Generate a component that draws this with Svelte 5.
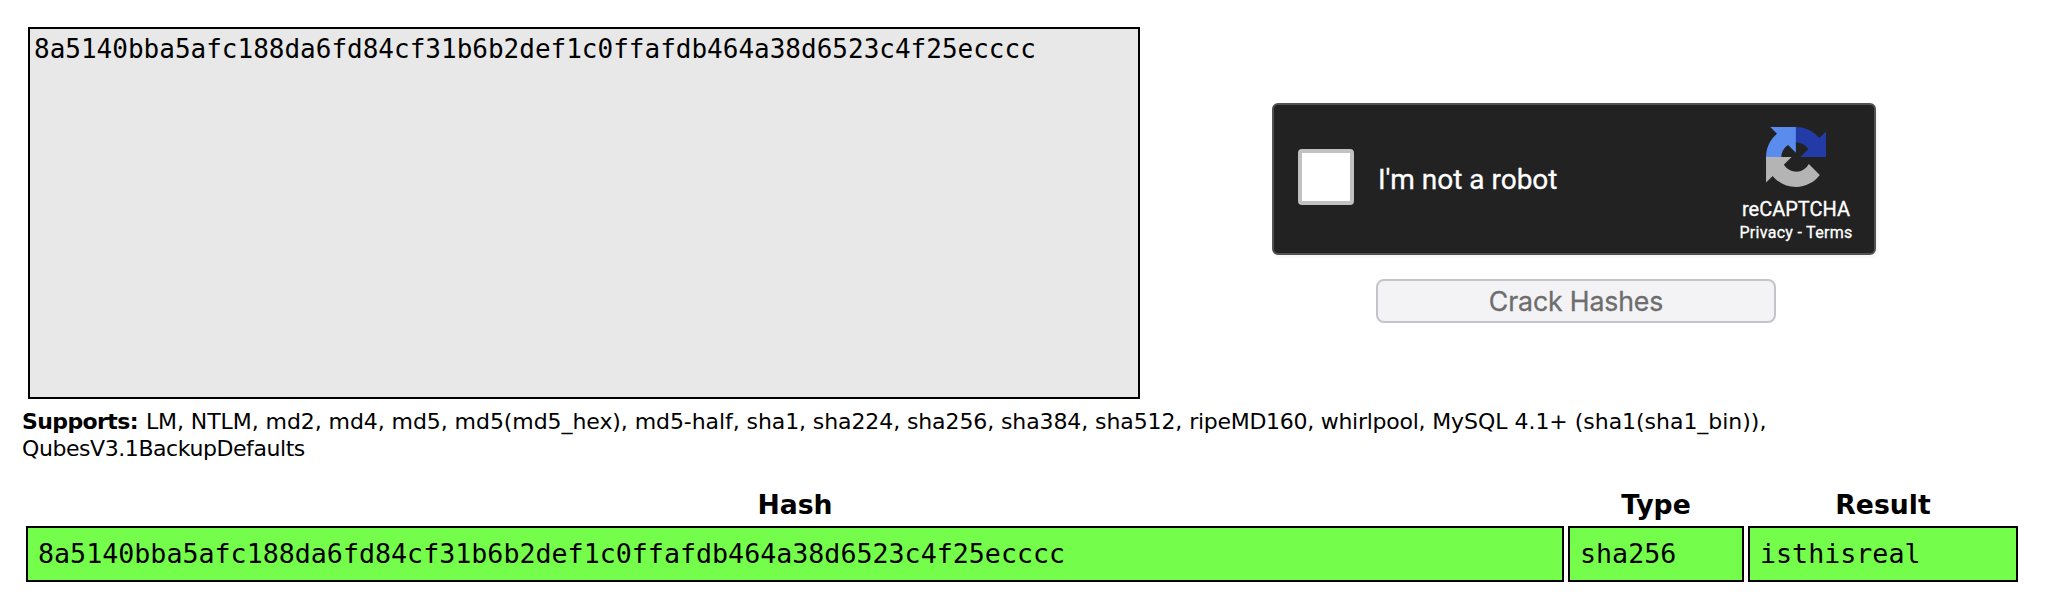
<script>
  const hash = '8a5140bba5afc188da6fd84cf31b6b2def1c0ffafdb464a38d6523c4f25ecccc';
  const rows = [{ hash, type: 'sha256', result: 'isthisreal' }];
</script>

<main>
  <form class="cracker" onsubmit={(e) => e.preventDefault()}>
    <textarea spellcheck="false" value={hash}></textarea>
    <div class="side">
      <div class="captcha">
        <span class="check"></span>
        <span class="label">I'm not a robot</span>
        <div class="brand">
          <svg viewBox="0 0 64 64" width="60" height="60">
            <path fill="#233ba6" d="M64 31.955l-.033-1.37V4.687l-7.16 7.16C50.948 4.674 42.033.093 32.05.093c-10.4 0-19.622 4.96-25.458 12.64l11.736 11.86a15.55 15.55 0 0 1 4.754-5.334c2.05-1.6 4.952-2.906 8.968-2.906.485 0 .86.057 1.135.163 4.976.393 9.288 3.14 11.828 7.124l-8.307 8.307L64 31.953" />
            <path fill="#5a8cee" d="M31.862.094l-1.37.033H4.594l7.16 7.16C4.58 13.147 0 22.06 0 32.046c0 10.4 4.96 19.622 12.64 25.458L24.5 45.768a15.55 15.55 0 0 1-5.334-4.754c-1.6-2.05-2.906-4.952-2.906-8.968 0-.485.057-.86.163-1.135.393-4.976 3.14-9.288 7.124-11.828l8.307 8.307L31.86.095" />
            <path fill="#b4b4b4" d="M.001 32.045l.033 1.37v25.898l7.16-7.16c5.86 7.173 14.774 11.754 24.76 11.754 10.4 0 19.622-4.96 25.458-12.64l-11.736-11.86a15.55 15.55 0 0 1-4.754 5.334c-2.05 1.6-4.952 2.906-8.968 2.906-.485 0-.86-.057-1.135-.163-4.976-.393-9.288-3.14-11.828-7.124l8.307-8.307c-10.522.04-22.4.066-27.295-.005" />
          </svg>
          <span class="name">reCAPTCHA</span>
          <span class="links">Privacy - Terms</span>
        </div>
      </div>
      <button disabled>Crack Hashes</button>
    </div>
  </form>

  <p><b>Supports:</b> <span class="first">LM, NTLM, md2, md4, md5, md5(md5_hex), md5-half,</span> <span>sha1, sha224, sha256, sha384, sha512,</span> <span class="names">ripeMD160, whirlpool,</span> <span class="mysql">MySQL 4.1+ (sha1(sha1_bin)),</span><br /><span class="last">QubesV3.1BackupDefaults</span></p>

  <div class="results">
    <div class="th">Hash</div>
    <div class="th">Type</div>
    <div class="th">Result</div>
    {#each rows as row}
      <div class="td">{row.hash}</div>
      <div class="td">{row.type}</div>
      <div class="td">{row.result}</div>
    {/each}
  </div>
</main>

<style>
  :global(body) {
    margin: 0;
    background: #fff;
  }
  main {
    box-sizing: border-box;
    height: 596px;
    overflow: hidden;
    padding: 27px 36px 0 22px;
    color: #000;
    font-family: Verdana, 'DejaVu Sans', sans-serif;
  }
  .cracker {
    display: flex;
    padding-left: 6px;
  }
  textarea {
    box-sizing: border-box;
    width: 1112px;
    height: 372px;
    margin: 0;
    padding: 5px 4px;
    border: 2px solid #000;
    border-radius: 0;
    outline: none;
    resize: none;
    background: #e8e8e8;
    color: #000;
    font: 26px/31px 'DejaVu Sans Mono', monospace;
  }
  .side {
    display: flex;
    flex-direction: column;
    margin: 76px 0 0 132px;
  }
  .captcha {
    box-sizing: border-box;
    display: flex;
    width: 604px;
    height: 152px;
    border: 2px solid #525252;
    border-radius: 6px;
    background: #222;
    box-shadow: 2px 2px 2px 1px rgba(0, 0, 0, 0.03);
    color: #fff;
    font-family: Roboto, sans-serif;
    -webkit-text-stroke: 0.3px #fff;
  }
  .check {
    box-sizing: border-box;
    width: 56px;
    height: 56px;
    margin: 44px 0 0 24px;
    border: 4px solid #c1c1c1;
    border-radius: 4px;
    background: #fff;
  }
  .label {
    margin: 58px 0 0 24px;
    font-size: 28px;
    line-height: 34px;
    white-space: nowrap;
  }
  .brand {
    display: flex;
    flex-direction: column;
    align-items: center;
    width: 140px;
    margin: 22px 8px 0 auto;
  }
  .name {
    margin-top: 10px;
    font-size: 20px;
    line-height: 24px;
  }
  .links {
    font-size: 16px;
    line-height: 24px;
    letter-spacing: 0.3px;
    white-space: pre;
  }
  button {
    box-sizing: border-box;
    width: 400px;
    height: 44px;
    margin: 24px 0 0 104px;
    padding: 0;
    border: 2px solid #c4c3ca;
    border-radius: 8px;
    background: #f3f3f6;
    color: #6d6d6d;
    font: 26.67px/40px Inter, sans-serif;
    letter-spacing: -0.15px;
    -webkit-text-stroke: 0.3px #6d6d6d;
  }
  p {
    margin: 9px 0 0;
    font-size: 22px;
    line-height: 27px;
    white-space: nowrap;
    letter-spacing: -0.1px;
  }
  p b {
    margin-right: 1px;
    letter-spacing: -0.6px;
  }
  .first {
    letter-spacing: -0.07px;
  }
  .names {
    letter-spacing: -0.27px;
  }
  .mysql {
    letter-spacing: -0.03px;
  }
  .last {
    letter-spacing: -0.43px;
  }
  .results {
    display: grid;
    grid-template-columns: 1538px 176px 270px;
    column-gap: 4px;
    margin: 27px 0 0 4px;
  }
  .th {
    height: 37px;
    font-size: 26.67px;
    font-weight: bold;
    line-height: 31px;
    text-align: center;
  }
  .td {
    box-sizing: border-box;
    height: 56px;
    padding: 0 10px;
    border: 2px solid #000;
    background: #75fd4c;
    font: 26.67px/52px 'DejaVu Sans Mono', monospace;
  }
</style>
